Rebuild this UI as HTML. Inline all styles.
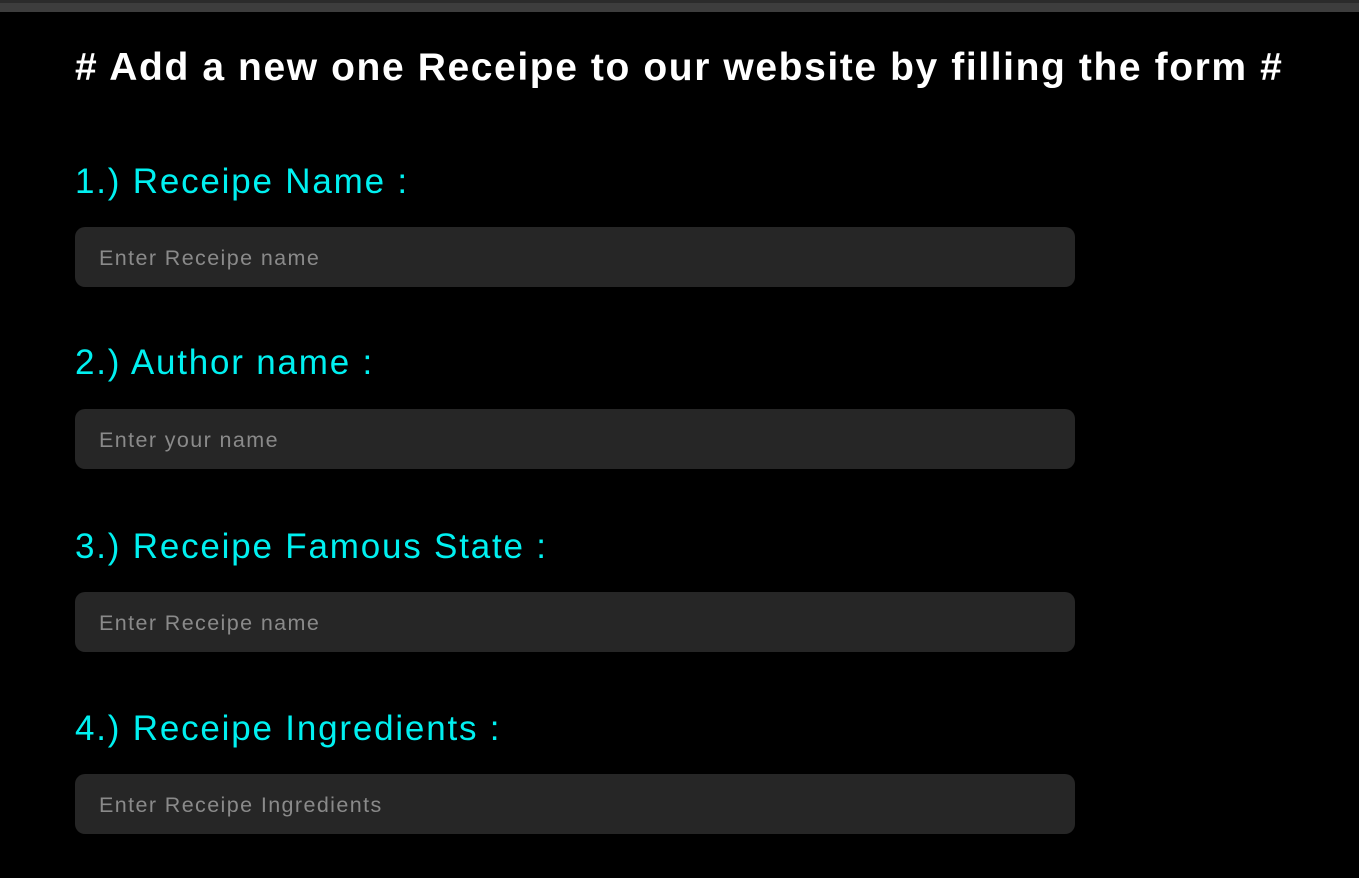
<!DOCTYPE html>
<html><head><meta charset="utf-8"><style>
html,body{margin:0;padding:0;background:#000;width:1359px;height:878px;overflow:hidden;font-family:"Liberation Sans",sans-serif}
.bar1{position:absolute;left:0;top:0;width:1359px;height:3px;background:#2b2b2b}
.bar2{position:absolute;left:0;top:3px;width:1359px;height:9px;background:#3d3d3d}
h1{position:absolute;left:75px;top:46px;margin:0;color:#fff;font-size:39px;font-weight:bold;white-space:nowrap;letter-spacing:1.6px}
.lbl{position:absolute;left:75px;margin:0;color:#00f0f0;font-size:35px;white-space:nowrap;letter-spacing:1.8px}
.inp{position:absolute;left:75px;width:1000px;height:60px;border-radius:10px;background:#262626;color:#8a8a8a;font-size:21.5px;line-height:62px;box-sizing:border-box;padding-left:24px;letter-spacing:1.4px}
</style></head><body>
<div class="bar1"></div><div class="bar2"></div>
<h1># Add a new one Receipe to our website by filling the form #</h1>
<div class="lbl" style="top:162px">1.) Receipe Name :</div>
<div class="inp" style="top:227px">Enter Receipe name</div>
<div class="lbl" style="top:343px">2.) Author name :</div>
<div class="inp" style="top:409px">Enter your name</div>
<div class="lbl" style="top:527px">3.) Receipe Famous State :</div>
<div class="inp" style="top:592px">Enter Receipe name</div>
<div class="lbl" style="top:709px">4.) Receipe Ingredients :</div>
<div class="inp" style="top:774px">Enter Receipe Ingredients</div>
</body></html>
